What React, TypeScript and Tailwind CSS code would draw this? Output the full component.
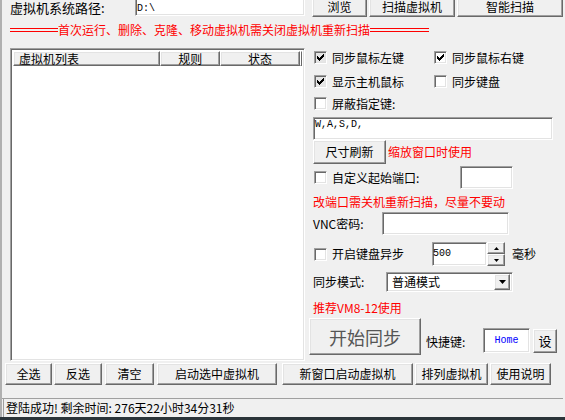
import React from "react";

const sunken =
  "border border-t-[#a0a0a0] border-l-[#a0a0a0] border-r-white border-b-white shadow-[inset_1px_1px_#696969,inset_-1px_-1px_#e3e3e3] bg-white";
const raised =
  "border border-t-white border-l-white border-r-[#696969] border-b-[#696969] shadow-[inset_-1px_-1px_#a0a0a0,inset_1px_1px_#e3e3e3] bg-[#f0f0f0]";

function Check({ checked, gray }: { checked?: boolean; gray?: boolean }) {
  return (
    <span
      className={
        "w-[13px] h-[13px] shrink-0 flex items-center justify-center border border-t-[#a0a0a0] border-l-[#a0a0a0] border-r-white border-b-white shadow-[inset_1px_1px_#696969,inset_-1px_-1px_#e3e3e3] " +
        (gray ? "bg-[#e6e6e6]" : "bg-white")
      }
    >
      {checked && (
        <svg width="7" height="7" viewBox="0 0 7 7" shapeRendering="crispEdges">
          <path d="M0 2h1v3H0zM1 3h1v3H1zM2 4h1v3H2zM3 3h1v3H3zM4 2h1v3H4zM5 1h1v3H5zM6 0h1v3H6z" fill="#000" />
        </svg>
      )}
    </span>
  );
}

function CheckLabel({ label, checked, gray, w }: { label: string; checked?: boolean; gray?: boolean; w?: string }) {
  return (
    <div className={"flex items-center h-full " + (w ?? "")}>
      <span className="ml-[1px]">
        <Check checked={checked} gray={gray} />
      </span>
      <span className="ml-[5px] leading-[14px]">{label}</span>
    </div>
  );
}

function Btn({ children, className }: { children: React.ReactNode; className?: string }) {
  return (
    <div className={raised + " flex items-center justify-center shrink-0 leading-[14px] " + (className ?? "")}>
      {children}
    </div>
  );
}

export default function App() {
  return (
    <div className="w-[565px] h-[420px] bg-[#2b3439] overflow-hidden font-['Noto_Sans_CJK_SC',sans-serif] text-[12px] text-black">
      <div className="h-[417px] bg-[#f0f0f0] border-l-2 border-l-[#b0b0b0] flex flex-col">
        {/* top row */}
        <div className="flex items-start h-[23px] mt-[-6px] shrink-0">
          <div className="ml-[8px] w-[125px] mt-[7px] leading-[14px] text-[13px]">虚拟机系统路径:</div>
          <div className={sunken + " mt-[2px] h-[20px] w-[170px] font-['Liberation_Mono',monospace] text-[10px] leading-[12px] pt-[6px] pl-[1px]"}>
            D:\
          </div>
          <Btn className="ml-[7px] w-[55px] h-[23px] pt-[3px]">浏览</Btn>
          <Btn className="ml-[2px] w-[86px] h-[23px] pt-[3px]">扫描虚拟机</Btn>
          <Btn className="ml-[2px] w-[106px] h-[23px] pt-[3px]">智能扫描</Btn>
        </div>

        {/* red heading */}
        <div className="flex items-center h-[14px] mt-[6px] shrink-0">
          <div className="ml-[8px] w-[48px] h-[4px] border-y border-[#ff0000]" />
          <div className="text-[#ff0000] leading-[14px]">首次运行、删除、克隆、移动虚拟机需关闭虚拟机重新扫描</div>
          <div className="w-[59px] h-[4px] border-y border-[#ff0000]" />
        </div>

        {/* main */}
        <div className="flex mt-[11px] h-[313px] shrink-0">
          <div className={sunken + " ml-[8px] w-[295px] h-[313px] p-[2px]"}>
            <div className="flex h-[15px] leading-[13px]">
              <div className={raised + " w-[149px] pl-[5px]"}>虚拟机列表</div>
              <div className={raised + " w-[60px] text-center"}>规则</div>
              <div className={raised + " w-[81px] text-center"}>状态</div>
              <div className={raised + " flex-1"} />
            </div>
          </div>

          <div className="flex flex-col pl-[8px] w-[260px]">
            <div className="flex h-[13px] mt-[3px]">
              <CheckLabel label="同步鼠标左键" checked gray w="w-[120px]" />
              <CheckLabel label="同步鼠标右键" checked />
            </div>
            <div className="flex h-[13px] mt-[11px]">
              <CheckLabel label="显示主机鼠标" checked gray w="w-[120px]" />
              <CheckLabel label="同步键盘" />
            </div>
            <div className="flex h-[13px] mt-[9px]">
              <CheckLabel label="屏蔽指定键:" />
            </div>
            <div className={sunken + " mt-[7px] h-[23px] w-[240px] font-['Liberation_Mono',monospace] text-[10px] leading-[12px] pl-[1px] pt-[1px]"}>
              W,A,S,D,
            </div>
            <div className="flex items-center h-[24px]">
              <Btn className="w-[73px] h-[24px]">尺寸刷新</Btn>
              <span className="ml-[2px] text-[#ff0000] leading-[14px]">缩放窗口时使用</span>
            </div>
            <div className="flex items-center h-[23px] mt-[2px]">
              <CheckLabel label="自定义起始端口:" w="w-[147px]" />
              <div className={sunken + " w-[53px] h-[23px]"} />
            </div>
            <div className="mt-[6px] h-[14px] leading-[14px] text-[#ff0000]">改端口需关机重新扫描，尽量不要动</div>
            <div className="flex items-center h-[23px] mt-[3px]">
              <span className="w-[69px] leading-[14px]">VNC密码:</span>
              <div className={sunken + " w-[127px] h-[23px]"} />
            </div>
            <div className="flex items-center h-[24px] mt-[7px]">
              <CheckLabel label="开启键盘异步" w="w-[119px]" />
              <div className={sunken + " w-[55px] h-[24px] flex items-center font-['Liberation_Mono',monospace] text-[10px] leading-[12px]"}>
                500
              </div>
              <div className="flex flex-col w-[18px] h-[24px]">
                <div className={raised + " h-[12px] flex items-center justify-center"}>
                  <svg width="5" height="3" viewBox="0 0 5 3">
                    <path d="M2.5 0L5 3H0z" fill="#000" />
                  </svg>
                </div>
                <div className={raised + " h-[12px] flex items-center justify-center"}>
                  <svg width="5" height="3" viewBox="0 0 5 3">
                    <path d="M0 0h5L2.5 3z" fill="#000" />
                  </svg>
                </div>
              </div>
              <span className="ml-[7px] leading-[14px]">毫秒</span>
            </div>
            <div className="flex items-center h-[20px] mt-[6px]">
              <span className="w-[73px] leading-[14px]">同步模式:</span>
              <div className={sunken + " w-[127px] h-[20px] flex items-center p-[2px]"}>
                <span className="flex-1 pl-[3px] leading-[14px]">普通模式</span>
                <div className={raised + " w-[16px] h-[16px] flex items-center justify-center"}>
                  <svg width="7" height="4" viewBox="0 0 7 4">
                    <path d="M0 0h7L3.5 4z" fill="#000" />
                  </svg>
                </div>
              </div>
            </div>
            <div className="mt-[9px] h-[14px] leading-[14px] text-[#ff0000]">推荐VM8-12使用</div>
            <div className="flex items-start h-[37px] mt-[3px]">
              <Btn className="ml-[-4px] w-[112px] h-[37px] text-[18px] text-[#555555] leading-[22px]">开始同步</Btn>
              <span className="ml-[5px] w-[57px] mt-[17px] leading-[14px]">快捷键:</span>
              <div className={sunken + " mt-[10px] w-[47px] h-[25px] flex items-center justify-center font-['Liberation_Mono',monospace] text-[10px] leading-[12px] text-[#0000ff]"}>
                Home
              </div>
              <Btn className="ml-[3px] mt-[11px] w-[24px] h-[24px] text-[13px]">设</Btn>
            </div>
          </div>
        </div>

        {/* bottom buttons */}
        <div className="flex h-[22px] mt-[2px] shrink-0">
          <Btn className="ml-[3px] w-[47px] h-[22px]">全选</Btn>
          <Btn className="ml-[2px] w-[48px] h-[22px]">反选</Btn>
          <Btn className="ml-[3px] w-[49px] h-[22px]">清空</Btn>
          <Btn className="ml-[3px] w-[120px] h-[22px]">启动选中虚拟机</Btn>
          <Btn className="ml-[5px] w-[131px] h-[22px]">新窗口启动虚拟机</Btn>
          <Btn className="ml-[2px] w-[73px] h-[22px]">排列虚拟机</Btn>
          <Btn className="ml-[2px] w-[61px] h-[22px]">使用说明</Btn>
        </div>

        {/* status bar */}
        <div className="mt-[13px] flex-1 border-t border-t-[#a0a0a0] flex mr-[2px]">
          <div className="ml-[1px] border-l border-l-[#a0a0a0] pl-[2px] pt-[2px] leading-[14px] whitespace-nowrap">
            登陆成功! 剩余时间: 276天22小时34分31秒
          </div>
        </div>
      </div>
    </div>
  );
}
